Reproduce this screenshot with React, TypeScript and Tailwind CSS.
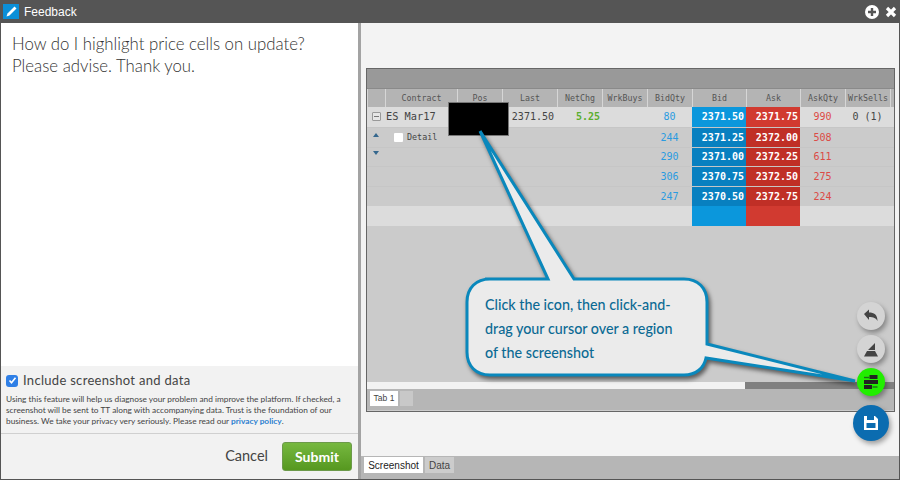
const cols = "grid-cols-[18px_72px_45px_55px_45px_45px_45px_54px_54px_45px_45px_1fr]";
const headers = ["", "Contract", "Pos", "Last", "NetChg", "WrkBuys", "BidQty", "Bid", "Ask", "AskQty", "WrkSells", ""];
const rows = [
  ["80", "2371.50", "2371.75", "990"],
  ["244", "2371.25", "2372.00", "508"],
  ["290", "2371.00", "2372.25", "611"],
  ["306", "2370.75", "2372.50", "275"],
  ["247", "2370.50", "2372.75", "224"],
  ["", "", "", ""],
];

function Grid() {
  return (
    <div className="font-['DejaVu_Sans_Mono',monospace]">
      <div className={`grid ${cols} h-[18px] bg-[#b4b4b4]`}>
        {headers.map((h, i) => (
          <div key={i} className="flex items-center justify-center border-l border-l-[#d6d6d6] text-[8.3px] text-[#555]">{h}</div>
        ))}
      </div>
      {rows.map((r, i) => {
        const light = i === 0 || i === 5;
        return (
          <div key={i} className={`grid ${cols} h-[19.8px] items-stretch text-[10px] ${light ? "bg-[#dcdcdc]" : "bg-[#cbcbcb] border-t border-t-[#c6c6c6]"}`}>
            <div className="flex items-center justify-center">
              {i === 0 && <span className="flex h-[9px] w-[9px] items-center justify-center rounded-[1px] border border-[#999] bg-[#e6e6e6]"><span className="h-[1px] w-[5px] bg-[#777]" /></span>}
              {i === 1 && <span className="mb-[5px] h-0 w-0 border-x-[3.5px] border-b-[4px] border-x-transparent border-b-[#35688e]" />}
              {i === 2 && <span className="mb-[7px] h-0 w-0 border-x-[3.5px] border-t-[4px] border-x-transparent border-t-[#35688e]" />}
            </div>
            <div className="flex items-center text-[#444]">
              {i === 0 && <span className="pl-[1px] text-[10.3px]">ES Mar17</span>}
              {i === 1 && (
                <span className="flex items-center gap-[4px] pl-[9px] text-[8.4px]">
                  <span className="h-[9px] w-[9px] rounded-[1px] bg-white" />Detail
                </span>
              )}
            </div>
            <div />
            <div className="flex items-center justify-end pr-[3px] text-[#444]">{i === 0 ? "2371.50" : ""}</div>
            <div className="flex items-center justify-end pr-[2px] font-bold text-[#5aae2e]">{i === 0 ? "5.25" : ""}</div>
            <div />
            <div className="flex items-center justify-center text-[#2a9be0]">{r[0]}</div>
            <div className={`flex items-center justify-end pr-[2px] font-bold text-white ${light ? "bg-[#0b97dc]" : "bg-[#0880c0]"}`}>{r[1]}</div>
            <div className={`flex items-center justify-end pr-[2px] font-bold text-white ${light ? "bg-[#d13a30]" : "bg-[#c02f26]"}`}>{r[2]}</div>
            <div className="flex items-center justify-center text-[#dc4a45]">{r[3]}</div>
            <div className="flex items-center justify-center text-[#444]">{i === 0 ? "0 (1)" : ""}</div>
            <div />
          </div>
        );
      })}
    </div>
  );
}

function Fab({ className, children }: { className: string; children: React.ReactNode }) {
  return (
    <div className={`absolute flex items-center justify-center rounded-full shadow-[2px_3px_5px_rgba(0,0,0,0.35)] ${className}`}>
      {children}
    </div>
  );
}

export default function App() {
  return (
    <div className="flex h-[480px] w-[900px] flex-col overflow-hidden bg-[#555] font-['Lato',sans-serif]">
      <div className="flex h-[23px] shrink-0 items-center text-white">
        <div className="ml-[3px] flex h-[15px] w-[16px] items-center justify-center bg-[#0b8fd8]">
          <svg width="13" height="13" viewBox="0 0 13 13">
            <path d="M1.5 11.5 L2.5 8.5 L9.5 1.5 L11.5 3.5 L4.5 10.5 Z" fill="#fff" />
          </svg>
        </div>
        <span className="ml-[5px] font-['Liberation_Sans',sans-serif] text-[12px]">Feedback</span>
        <div className="ml-auto mr-[3px] flex items-center gap-[6px]">
          <svg width="14" height="14" viewBox="0 0 14 14">
            <circle cx="7" cy="7" r="7" fill="#fff" />
            <path d="M7 3v8M3 7h8" stroke="#555" strokeWidth="2.4" />
          </svg>
          <svg width="12" height="12" viewBox="0 0 12 12">
            <path d="M2 2l8 8M10 2l-8 8" stroke="#fff" strokeWidth="3.2" />
          </svg>
        </div>
      </div>

      <div className="flex min-h-0 flex-1 pb-[1px] pl-[1px] pr-[1px]">
        <div className="flex w-[357px] flex-col bg-white">
          <div className="flex-1 px-[11px] pt-[10px] text-[16.8px] font-light leading-[22px] text-[#333]">
            How do I highlight price cells on update?<br />Please advise. Thank you.
          </div>
          <div className="h-[113px] bg-[#f2f2f2]">
            <div className="flex h-[28px] items-center gap-[5px] pl-[5px] pt-[1px]">
              <span className="flex h-[12px] w-[12px] items-center justify-center rounded-[3px] bg-[#2f7fe6]">
                <svg width="9" height="9" viewBox="0 0 9 9"><path d="M1.5 4.5l2 2.2 4-5" fill="none" stroke="#fff" strokeWidth="1.6" /></svg>
              </span>
              <span className="text-[13px] tracking-[0.3px] text-[#444]">Include screenshot and data</span>
            </div>
            <p className="h-[39px] whitespace-nowrap pl-[5px] text-[8.3px] leading-[11px] text-[#444]">
              Using this feature will help us diagnose your problem and improve the platform. If checked, a<br />screenshot will be sent to TT along with accompanying data. Trust is the foundation of our<br />business. We take your privacy very seriously. Please read our <span className="font-bold text-[#2b7fd0]">privacy policy</span>.
            </p>
            <div className="flex h-[46px] items-center justify-end gap-[14px] border-t border-t-[#d0d0d0] pb-[1px] pr-[6px]">
              <span className="text-[14.5px] text-[#444]">Cancel</span>
              <span className="flex h-[29px] w-[70px] items-center justify-center rounded-[3px] border border-[#6c9a4a] bg-gradient-to-b from-[#76b83f] to-[#56981f] text-[14px] font-bold text-white">Submit</span>
            </div>
          </div>
        </div>

        <div className="flex flex-1 flex-col border-l-[3px] border-l-[#a3a3a3] bg-[#f3f3f3]">
          <div className="relative flex-1 pl-[5px] pr-[4px] pt-[45px]">
            <div className="h-[344px] w-[529px] border border-[#666] bg-[#cbcbcb]">
              <div className="h-[20px] border-b border-b-[#8a8a8a] bg-[#999]" />
              <Grid />
              <div className="h-[156px]" />
              <div className="flex h-[7px] bg-[#808080]"><div className="w-[378px] bg-[#f2f2f2]" /></div>
              <div className="flex h-[21px] items-start gap-[2px] bg-[#b6b6b6] pl-[3px] pt-[2px]">
                <span className="flex h-[15px] w-[28px] items-center justify-center bg-white font-['Liberation_Sans',sans-serif] text-[8.5px] text-[#444]">Tab 1</span>
                <span className="h-[15px] w-[13px] bg-[#c8c8c8]" />
              </div>
            </div>

            <div className="absolute left-[87px] top-[79px] h-[34px] w-[61px] border border-[#777] bg-black" />

            <svg className="absolute left-0 top-0 [filter:drop-shadow(2px_3px_2px_rgba(0,0,0,0.55))]" width="538" height="456" viewBox="361 23 538 456">
              <path
                d="M485 279 H548 L480 131 L574 279 H684 C698 279 707 288 707 302 V344 L855 381 L706 358 C704 368 696 375 684 375 H490 C476 375 467 366 467 352 V302 C467 288 476 279 490 279 Z"
                fill="#ebebeb" stroke="#0a88bc" strokeWidth="3" strokeLinejoin="miter"
              />
            </svg>
            <div className="absolute left-[124px] top-[270px] text-[14.3px] font-medium leading-[24px] text-[#0b6a94]">
              Click the icon, then click-and-<br />drag your cursor over a region<br />of the screenshot
            </div>

            <Fab className="left-[496px] top-[279px] h-[28px] w-[28px] bg-[#d4d4d4]">
              <svg width="16" height="14" viewBox="0 0 16 14"><path d="M1 5l5-4.5v3c5 0 8.5 2 8.5 8.5-1.5-3-4-4-8.5-4V11Z" fill="#444" /></svg>
            </Fab>
            <Fab className="left-[496px] top-[312px] h-[28px] w-[28px] bg-[#d4d4d4]">
              <svg width="16" height="15" viewBox="0 0 16 15"><path d="M5 8L12 1v7ZM4 9h8l3 5.5H1Z" fill="#444" /></svg>
            </Fab>
            <Fab className="left-[496px] top-[345px] h-[28px] w-[28px] bg-[#22ee00]">
              <svg width="16" height="14" viewBox="0 0 16 14">
                <path d="M1 2.5h5" stroke="#1f6a1a" strokeWidth="1.4" /><rect x="6.5" y="0" width="8" height="4" fill="#222" />
                <rect x="1" y="5" width="14" height="4" fill="#222" />
                <rect x="1" y="10" width="8" height="4" fill="#222" /><path d="M9.5 12h5" stroke="#1f6a1a" strokeWidth="1.4" />
              </svg>
            </Fab>
            <Fab className="left-[492px] top-[382px] h-[36px] w-[36px] bg-[#0b6cb0]">
              <svg width="16" height="16" viewBox="0 0 16 16">
                <path d="M1 1h11l3 3v11H1Z" fill="#fff" />
                <rect x="4" y="1" width="7" height="4" fill="#0b6cb0" />
                <rect x="3.5" y="8" width="9" height="5" fill="#0b6cb0" />
              </svg>
            </Fab>
          </div>

          <div className="flex h-[23px] items-start gap-[2px] bg-[#b6b6b6] pl-[3px] pt-[1px] font-['Liberation_Sans',sans-serif] text-[10px]">
            <span className="flex h-[16px] w-[59px] items-center justify-center bg-white text-[#222]">Screenshot</span>
            <span className="flex h-[16px] w-[29px] items-center justify-center bg-[#cccccc] text-[#444]">Data</span>
          </div>
        </div>
      </div>
    </div>
  );
}
